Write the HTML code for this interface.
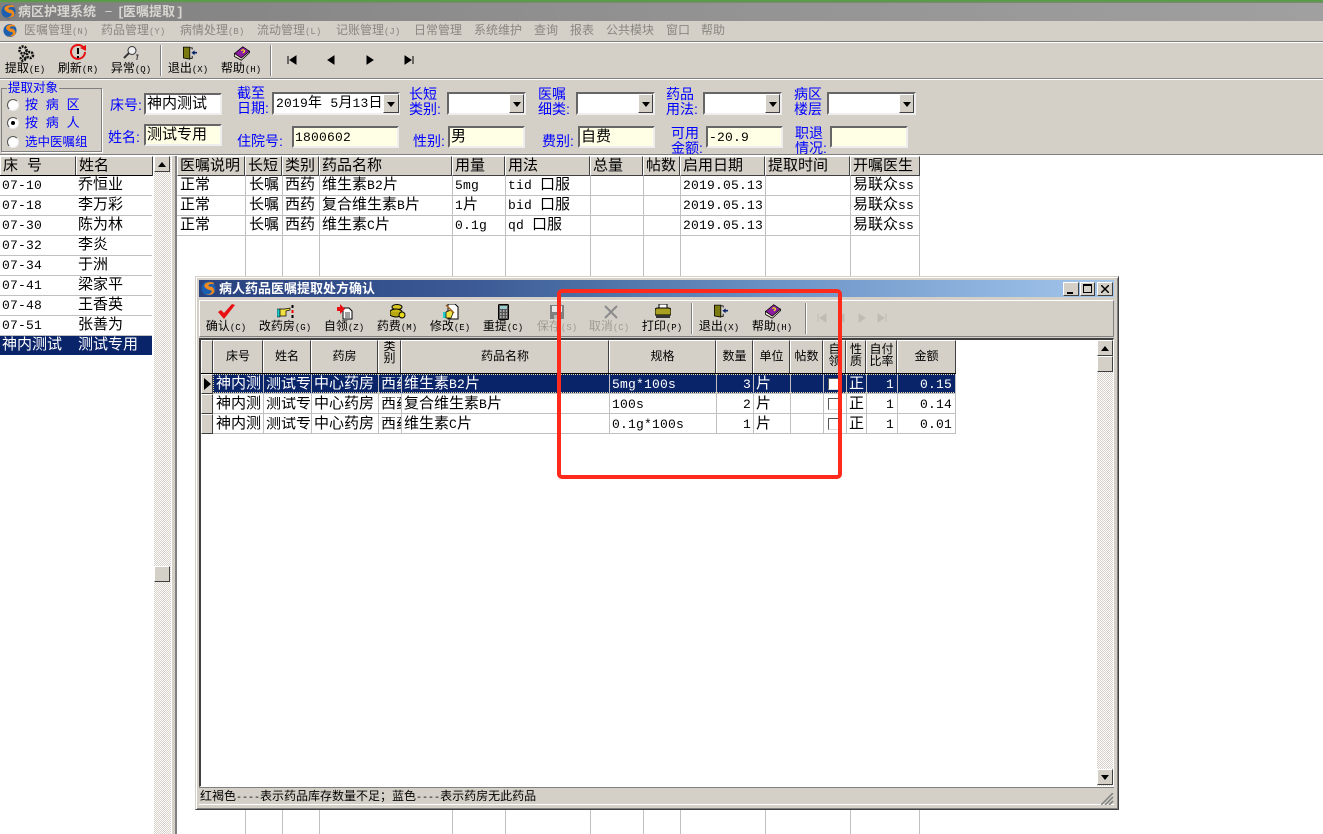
<!DOCTYPE html>
<html><head><meta charset="utf-8"><style>
html,body{margin:0;padding:0;width:1323px;height:834px;overflow:hidden;background:#fff}
body{position:relative;font-family:"Liberation Mono","WenQuanYi Zen Hei","Noto Sans CJK SC",monospace;font-size:15px;color:#000}
div,svg.i{position:absolute}
.b{box-sizing:border-box}
i{font-style:normal;font-size:13px;letter-spacing:.2px}
small{font-size:9px}
.t{position:absolute;white-space:nowrap;line-height:16px}
.m{font-size:12px;color:#8a8680;top:23px}
.l{font-size:12px;text-align:center;width:70px;top:61px}
.dl{font-size:12px;text-align:center;width:70px;top:319px}
.g{color:#a09c94}
.lb{color:#0000ff;font-family:"Liberation Sans","WenQuanYi Zen Hei","Noto Sans CJK SC",sans-serif;font-size:14px;line-height:15px}
.in{box-sizing:border-box;border:2px solid;border-color:#666 #eee #eee #666;background:#fff;padding-left:1px;line-height:20px;font-size:15px;white-space:nowrap;overflow:hidden}
.y{background:#ffffe6}
.ar{box-sizing:border-box;background:#d4d0c8;border:1px solid;border-color:#fff #404040 #404040 #fff}
.ar:after{content:"";position:absolute;left:50%;top:50%;margin:-2px 0 0 -4px;border:4px solid transparent;border-top:5px solid #000;border-bottom:0}
.up:after{border-bottom:5px solid #000;border-top:0}
.nb:after{display:none}
.hd{box-sizing:border-box;background:#d4d0c8;border:1px solid;border-color:#fff #404040 #404040 #fff;text-align:center;white-space:nowrap;overflow:hidden}
.h1{top:156px;height:20px;line-height:19px;text-align:left;padding-left:2px}
.d1{top:340px;height:34px;font-size:12px;line-height:33px}
.d2{top:340px;height:34px;font-size:12px;line-height:12px;padding-top:3px}
.dit{background:repeating-conic-gradient(#d4d0c8 0 25%,#fff 0 50%) 0 0/2px 2px}
.vl{width:1px;background:#c0c0c0}
.hl{height:1px;background:#c0c0c0}
.rd{width:12px;height:12px;border-radius:50%;box-sizing:border-box;background:#fff;border:1px solid;border-color:#555 #eee #eee #555}
.sep{width:2px;background:linear-gradient(to right,#808080 50%,#fff 50%)}
</style></head><body>
<svg width="0" height="0" style="position:absolute"><defs>
<symbol id="logo" viewBox="0 0 16 16"><circle cx="8" cy="8" r="7.5" fill="#1c5fb0"/><path d="M13 1.500C6 0 1 4 5 7.500s8 1.500 6 4.500-5 2.500-8 1.500C9 16.500 16 14 14 9S8 7 8 5s3-2 6-1.500z" fill="#f08a1c"/></symbol>
<symbol id="exit" viewBox="0 0 20 18"><path d="M3 1h8v15l-8-1.500z" fill="#7a7a10" stroke="#000"/><path d="M11 2h3v2M14 12v3h-3" fill="none" stroke="#000"/><path d="M13 8l4-3v2h3v2h-3v2z" fill="#0a246a"/></symbol>
<symbol id="help" viewBox="0 0 24 20"><path d="M2 10L13 1l9 6-11 10z" fill="#8a1ca0" stroke="#000"/><path d="M2 10v4l9 5 11-10V7L11 16z" fill="#f0e8d0" stroke="#000"/><path d="M11 6q3-2 4 0t-2 3" fill="none" stroke="#ff0" stroke-width="1.500"/></symbol>
<symbol id="nf" viewBox="0 0 10 10"><path d="M1 1v8M9 1v8L3 5z" stroke="currentColor" fill="currentColor"/></symbol>
<symbol id="np" viewBox="0 0 10 10"><path d="M8 1v8L2 5z" fill="currentColor" stroke="currentColor"/></symbol>
<symbol id="nn" viewBox="0 0 10 10"><path d="M2 1v8l6-4z" fill="currentColor" stroke="currentColor"/></symbol>
<symbol id="nl" viewBox="0 0 10 10"><path d="M9 1v8M1 1v8l6-4z" stroke="currentColor" fill="currentColor"/></symbol>
</defs></svg>

<!-- title -->
<div style="left:0;top:0;width:1323px;height:2px;background:#5c9a4c"></div>
<div style="left:0;top:2px;width:1323px;height:1px;background:#7a8a70"></div>
<div style="left:0;top:3px;width:1323px;height:18px;background:linear-gradient(to right,#7f7f7f 0,#858585 190px,#8d8d8d 450px,#939393 720px,#a0a0a0 1323px)"></div>
<svg class="i" style="left:1px;top:4px" width="15" height="15"><use href="#logo"/></svg>
<span class="t" style="left:18px;top:4px;color:#d8d6d0;font-size:13px;font-weight:bold;line-height:18px">病区护理系统</span>
<span class="t" style="left:104px;top:4px;color:#d8d6d0;font-size:9px;font-weight:bold;line-height:18px">－</span>
<span class="t" style="left:117px;top:4px;color:#d8d6d0;font-size:13px;font-weight:bold;line-height:18px">[</span>
<span class="t" style="left:123px;top:4px;color:#d8d6d0;font-size:13px;font-weight:bold;line-height:18px">医嘱提取</span>
<span class="t" style="left:176px;top:4px;color:#d8d6d0;font-size:13px;font-weight:bold;line-height:18px">]</span>
<!-- menu -->
<div style="left:0;top:21px;width:1323px;height:20px;background:#d4d0c8"></div>
<svg class="i" style="left:3px;top:23px" width="14" height="15"><use href="#logo"/></svg>
<span class="t m" style="left:24px">医嘱管理<small>(N)</small></span><span class="t m" style="left:101px">药品管理<small>(Y)</small></span><span class="t m" style="left:180px">病情处理<small>(B)</small></span><span class="t m" style="left:257px">流动管理<small>(L)</small></span><span class="t m" style="left:336px">记账管理<small>(J)</small></span><span class="t m" style="left:414px">日常管理</span><span class="t m" style="left:474px">系统维护</span><span class="t m" style="left:534px">查询</span><span class="t m" style="left:570px">报表</span><span class="t m" style="left:606px">公共模块</span><span class="t m" style="left:666px">窗口</span><span class="t m" style="left:701px">帮助</span>
<div style="left:0;top:41px;width:1323px;height:1px;background:#808080"></div>
<div style="left:0;top:42px;width:1323px;height:1px;background:#fff"></div>
<!-- toolbar -->
<div style="left:0;top:43px;width:1323px;height:111px;background:#d4d0c8"></div>
<div style="left:0;top:78px;width:1323px;height:1px;background:#808080"></div>
<div style="left:0;top:79px;width:1323px;height:1px;background:#fff"></div>
<svg class="i" style="left:17px;top:45px" width="18" height="17" viewBox="0 0 18 17"><g fill="none" stroke="#111" stroke-width="2.600" stroke-dasharray="2 1"><circle cx="6" cy="5" r="3.500"/><circle cx="13" cy="10" r="3"/><circle cx="6" cy="13.500" r="2.200"/></g></svg>
<svg class="i" style="left:70px;top:44px" width="17" height="17" viewBox="0 0 17 17"><path d="M13 3a7 7 0 1 0 2 5" fill="none" stroke="#e81010" stroke-width="2"/><path d="M10 4l6-3v6z" fill="#e81010"/><path d="M8 4v6M8 12v2" stroke="#000" stroke-width="2"/></svg>
<svg class="i" style="left:123px;top:45px" width="16" height="16" viewBox="0 0 16 16"><circle cx="9" cy="5.500" r="4" fill="#eee" stroke="#333"/><path d="M6 8L1 13" stroke="#333" stroke-width="2"/><path d="M13 10h2l-1 3v2" fill="none" stroke="#333"/></svg>
<div class="sep" style="left:160px;top:45px;height:31px"></div>
<svg class="i" style="left:181px;top:46px" width="16" height="15"><use href="#exit"/></svg>
<svg class="i" style="left:233px;top:45px" width="18" height="17"><use href="#help"/></svg>
<div class="sep" style="left:270px;top:45px;height:31px"></div>
<svg class="i" style="left:287px;top:55px;color:#000" width="10" height="10"><use href="#nf"/></svg>
<svg class="i" style="left:326px;top:55px;color:#000" width="10" height="10"><use href="#np"/></svg>
<svg class="i" style="left:365px;top:55px;color:#000" width="10" height="10"><use href="#nn"/></svg>
<svg class="i" style="left:404px;top:55px;color:#000" width="10" height="10"><use href="#nl"/></svg>
<span class="t l" style="left:-10px">提取<small>(E)</small></span><span class="t l" style="left:43px">刷新<small>(R)</small></span><span class="t l" style="left:96px">异常<small>(Q)</small></span><span class="t l" style="left:153px">退出<small>(X)</small></span><span class="t l" style="left:206px">帮助<small>(H)</small></span>

<!-- group -->
<div class="b" style="left:1px;top:88px;width:101px;height:64px;border:1px solid #808080;box-shadow:1px 1px 0 #fff"></div>
<span class="t" style="left:7px;top:81px;font-size:12.5px;color:#00f;background:#d4d0c8;padding:0 1px">提取对象</span>
<div class="rd" style="left:7px;top:99px"></div><div class="rd" style="left:7px;top:117px"></div><div class="rd" style="left:7px;top:136px"></div>
<div style="left:11px;top:121px;width:4px;height:4px;border-radius:50%;background:#000"></div>
<span class="t" style="left:25px;top:98px;font-size:13px;color:#00f">按 病 区</span>
<span class="t" style="left:25px;top:116px;font-size:13px;color:#00f">按 病 人</span>
<span class="t" style="left:25px;top:135px;font-size:12.5px;color:#00f">选中医嘱组</span>

<!-- form -->
<span class="t lb" style="left:110px;top:98px">床号:</span>
<div class="in" style="left:144px;top:93px;width:78px;height:22px">神内测试</div>
<span class="t lb" style="left:108px;top:130px">姓名:</span>
<div class="in y" style="left:144px;top:124px;width:78px;height:22px">测试专用</div>
<span class="t lb" style="left:237px;top:86px">截至<br>日期:</span>
<div class="in" style="left:272px;top:92px;width:128px;height:23px;font-size:14px;padding-left:2px"><i>2019</i>年 <i>5</i>月<i>13</i>日</div><div class="ar" style="left:383px;top:94px;width:16px;height:19px"></div>
<span class="t lb" style="left:409px;top:87px">长短<br>类别:</span>
<div class="in" style="left:447px;top:92px;width:79px;height:23px"></div><div class="ar" style="left:509px;top:94px;width:15px;height:19px"></div>
<span class="t lb" style="left:538px;top:87px">医嘱<br>细类:</span>
<div class="in" style="left:576px;top:92px;width:79px;height:23px"></div><div class="ar" style="left:638px;top:94px;width:15px;height:19px"></div>
<span class="t lb" style="left:666px;top:87px">药品<br>用法:</span>
<div class="in" style="left:703px;top:92px;width:79px;height:23px"></div><div class="ar" style="left:765px;top:94px;width:15px;height:19px"></div>
<span class="t lb" style="left:794px;top:87px">病区<br>楼层</span>
<div class="in" style="left:827px;top:92px;width:89px;height:23px"></div><div class="ar" style="left:899px;top:94px;width:15px;height:19px"></div>

<span class="t lb" style="left:237px;top:134px">住院号:</span>
<div class="in y" style="left:292px;top:126px;width:107px;height:22px"><i>1800602</i></div>
<span class="t lb" style="left:413px;top:134px">性别:</span>
<div class="in y" style="left:448px;top:126px;width:77px;height:22px">男</div>
<span class="t lb" style="left:542px;top:134px">费别:</span>
<div class="in y" style="left:578px;top:126px;width:77px;height:22px">自费</div>
<span class="t lb" style="left:671px;top:126px">可用<br>金额:</span>
<div class="in y" style="left:706px;top:126px;width:77px;height:22px"><i>-20.9</i></div>
<span class="t lb" style="left:795px;top:126px">职退<br>情况:</span>
<div class="in y" style="left:830px;top:126px;width:78px;height:22px"></div>

<div style="left:0;top:154px;width:1323px;height:1px;background:#808080"></div>
<div style="left:0;top:155px;width:1323px;height:1px;background:#fff"></div>

<!-- left grid -->
<div class="hd h1" style="left:0;width:76px">床 号</div>
<div class="hd h1" style="left:76px;width:77px">姓名</div>
<div style="left:0;top:175px;width:152px;height:1px;background:#000"></div>
<div class="hl" style="left:0;top:195px;width:152px"></div><div class="hl" style="left:0;top:215px;width:152px"></div><div class="hl" style="left:0;top:235px;width:152px"></div><div class="hl" style="left:0;top:255px;width:152px"></div><div class="hl" style="left:0;top:275px;width:152px"></div><div class="hl" style="left:0;top:295px;width:152px"></div><div class="hl" style="left:0;top:315px;width:152px"></div><div class="hl" style="left:0;top:335px;width:152px"></div>
<div style="left:0;top:336px;width:152px;height:19px;background:#0a246a"></div>
<span class="t" style="left:2px;top:178px"><i>07-10</i></span><span class="t" style="left:78px;top:178px">乔恒业</span>
<span class="t" style="left:2px;top:198px"><i>07-18</i></span><span class="t" style="left:78px;top:198px">李万彩</span>
<span class="t" style="left:2px;top:218px"><i>07-30</i></span><span class="t" style="left:78px;top:218px">陈为林</span>
<span class="t" style="left:2px;top:238px"><i>07-32</i></span><span class="t" style="left:78px;top:238px">李炎</span>
<span class="t" style="left:2px;top:258px"><i>07-34</i></span><span class="t" style="left:78px;top:258px">于洲</span>
<span class="t" style="left:2px;top:278px"><i>07-41</i></span><span class="t" style="left:78px;top:278px">梁家平</span>
<span class="t" style="left:2px;top:298px"><i>07-48</i></span><span class="t" style="left:78px;top:298px">王香英</span>
<span class="t" style="left:2px;top:318px"><i>07-51</i></span><span class="t" style="left:78px;top:318px">张善为</span>
<span class="t" style="left:2px;top:338px;color:#fff">神内测试</span><span class="t" style="left:78px;top:338px;color:#fff">测试专用</span>

<!-- left scrollbar + splitter -->
<div class="dit" style="left:154px;top:156px;width:17px;height:678px"></div>
<div class="ar up" style="left:154px;top:156px;width:16px;height:16px"></div>
<div class="ar nb" style="left:154px;top:566px;width:16px;height:16px"></div>
<div style="left:171px;top:156px;width:1px;height:678px;background:#fff"></div>
<div style="left:172px;top:156px;width:3px;height:678px;background:#d4d0c8"></div>
<div style="left:175px;top:156px;width:2px;height:678px;background:#808080"></div>

<!-- main grid -->
<div class="vl" style="left:245px;top:175px;height:659px"></div><div class="vl" style="left:282px;top:175px;height:659px"></div><div class="vl" style="left:319px;top:175px;height:659px"></div><div class="vl" style="left:452px;top:175px;height:659px"></div><div class="vl" style="left:505px;top:175px;height:659px"></div><div class="vl" style="left:590px;top:175px;height:659px"></div><div class="vl" style="left:643px;top:175px;height:659px"></div><div class="vl" style="left:680px;top:175px;height:659px"></div><div class="vl" style="left:765px;top:175px;height:659px"></div><div class="vl" style="left:850px;top:175px;height:659px"></div><div class="vl" style="left:919px;top:175px;height:659px"></div>
<div class="hl" style="left:177px;top:195px;width:743px"></div><div class="hl" style="left:177px;top:215px;width:743px"></div><div class="hl" style="left:177px;top:235px;width:743px"></div>
<div class="hd h1" style="left:177px;width:68px">医嘱说明</div>
<div class="hd h1" style="left:245px;width:37px">长短</div>
<div class="hd h1" style="left:282px;width:37px">类别</div>
<div class="hd h1" style="left:319px;width:133px">药品名称</div>
<div class="hd h1" style="left:452px;width:53px">用量</div>
<div class="hd h1" style="left:505px;width:85px">用法</div>
<div class="hd h1" style="left:590px;width:53px">总量</div>
<div class="hd h1" style="left:643px;width:37px">帖数</div>
<div class="hd h1" style="left:680px;width:85px">启用日期</div>
<div class="hd h1" style="left:765px;width:85px">提取时间</div>
<div class="hd h1" style="left:850px;width:70px">开嘱医生</div>

<span class="t" style="left:180px;top:178px">正常</span><span class="t" style="left:249px;top:178px">长嘱</span><span class="t" style="left:285px;top:178px">西药</span><span class="t" style="left:322px;top:178px">维生素<i>B2</i>片</span><span class="t" style="left:455px;top:178px"><i>5mg</i></span><span class="t" style="left:508px;top:178px"><i>tid </i>口服</span><span class="t" style="left:683px;top:178px"><i>2019.05.13</i></span><span class="t" style="left:853px;top:178px">易联众<i>ss</i></span>
<span class="t" style="left:180px;top:198px">正常</span><span class="t" style="left:249px;top:198px">长嘱</span><span class="t" style="left:285px;top:198px">西药</span><span class="t" style="left:322px;top:198px">复合维生素<i>B</i>片</span><span class="t" style="left:455px;top:198px"><i>1</i>片</span><span class="t" style="left:508px;top:198px"><i>bid </i>口服</span><span class="t" style="left:683px;top:198px"><i>2019.05.13</i></span><span class="t" style="left:853px;top:198px">易联众<i>ss</i></span>
<span class="t" style="left:180px;top:218px">正常</span><span class="t" style="left:249px;top:218px">长嘱</span><span class="t" style="left:285px;top:218px">西药</span><span class="t" style="left:322px;top:218px">维生素<i>C</i>片</span><span class="t" style="left:455px;top:218px"><i>0.1g</i></span><span class="t" style="left:508px;top:218px"><i>qd </i>口服</span><span class="t" style="left:683px;top:218px"><i>2019.05.13</i></span><span class="t" style="left:853px;top:218px">易联众<i>ss</i></span>

<!-- dialog -->
<div class="b" style="left:195px;top:276px;width:924px;height:534px;background:#d4d0c8;border:1px solid;border-color:#d4d0c8 #404040 #404040 #d4d0c8;box-shadow:inset 1px 1px 0 #fff,inset -1px -1px 0 #808080"></div>
<div style="left:199px;top:280px;width:915px;height:17px;background:linear-gradient(to right,#28417f 0,#3c5a95 30%,#4f74a9 45%,#6e96c8 65%,#a3c6ec 100%)"></div>
<svg class="i" style="left:201px;top:281px" width="15" height="15"><use href="#logo"/></svg>
<span class="t" style="left:219px;top:281px;color:#fff;font-size:13px;font-weight:bold;line-height:17px">病人药品医嘱提取处方确认</span>
<div class="b" style="left:1063px;top:282px;width:16px;height:14px;background:#d4d0c8;border:1px solid;border-color:#fff #404040 #404040 #fff"><div style="left:3px;top:9px;width:6px;height:2px;background:#000"></div></div>
<div class="b" style="left:1080px;top:282px;width:15px;height:14px;background:#d4d0c8;border:1px solid;border-color:#fff #404040 #404040 #fff"><div class="b" style="left:2px;top:1px;width:9px;height:9px;border:1px solid #000;border-top-width:2px"></div></div>
<div class="b" style="left:1097px;top:282px;width:16px;height:14px;background:#d4d0c8;border:1px solid;border-color:#fff #404040 #404040 #fff"><svg class="i" style="left:3px;top:2px" width="8" height="8"><path d="M0 0l8 8M8 0L0 8" stroke="#000" stroke-width="1.500"/></svg></div>

<div class="b" style="left:199px;top:300px;width:915px;height:37px;border:1px solid;border-color:#fff #808080 #808080 #fff"></div>
<svg class="i" style="left:218px;top:304px" width="17" height="15" viewBox="0 0 17 15"><path d="M0 8l3-2 3 3 8-9 3 1-11 14z" fill="#e81010"/></svg>
<svg class="i" style="left:277px;top:305px" width="17" height="14" viewBox="0 0 17 14"><path d="M0 4h3v8H0z" fill="#2cc" stroke="#000" stroke-width=".5"/><path d="M3 4h5l5-1v2l-4 1v5H3z" fill="#f0e040" stroke="#000" stroke-width=".7"/><path d="M15.500 0v3" stroke="#000" stroke-width="2"/><path d="M15.500 5v3" stroke="#e00" stroke-width="2"/><path d="M15.500 10v3" stroke="#000" stroke-width="2"/></svg>
<svg class="i" style="left:337px;top:304px" width="16" height="16" viewBox="0 0 16 16"><path d="M6 4h6l3 3v8H6z" fill="#fff" stroke="#000"/><path d="M8 9h5M8 11h5M8 13h5" stroke="#000" stroke-width=".8"/><path d="M0 3h3V0l5 5-5 5V7H0z" fill="#e81010"/></svg>
<svg class="i" style="left:390px;top:304px" width="16" height="16" viewBox="0 0 16 16"><ellipse cx="7" cy="3" rx="5" ry="2.500" fill="#d8c820" stroke="#000"/><ellipse cx="6" cy="8" rx="6" ry="3" fill="#c8b818" stroke="#000"/><path d="M0 8v3q6 4 12 0V8" fill="#b8a810" stroke="#000"/><circle cx="12" cy="11" r="3" fill="#e8d820" stroke="#000"/></svg>
<svg class="i" style="left:443px;top:304px" width="16" height="16" viewBox="0 0 16 16"><path d="M5 0h7l3 3v12H5z" fill="#fff" stroke="#000"/><path d="M0 8h3v6H0z" fill="#2cc"/><path d="M3 8l5-2 2 3-2 5H3z" fill="#f0e040" stroke="#000" stroke-width=".7"/><path d="M3 1l8 8" stroke="#a06020" stroke-width="1.500"/></svg>
<svg class="i" style="left:498px;top:304px" width="11" height="16" viewBox="0 0 11 16"><rect x=".5" y=".5" width="10" height="15" rx="1" fill="#555" stroke="#000"/><rect x="2" y="2" width="7" height="3" fill="#9cc"/><path d="M2 7h1.500M5 7h1.500M8 7h1M2 10h1.500M5 10h1.500M8 10h1M2 13h1.500M5 13h1.500M8 13h1" stroke="#fff"/></svg>
<svg class="i" style="left:550px;top:305px" width="14" height="14" viewBox="0 0 14 14"><rect width="14" height="14" fill="#808080"/><rect x="2" y="1" width="10" height="6" fill="#e8e8e8"/><rect x="4" y="10" width="6" height="4" fill="#b8b8b8"/></svg>
<svg class="i" style="left:604px;top:305px" width="14" height="14" viewBox="0 0 14 14"><path d="M1 1l12 12M13 1L1 13" stroke="#8a8a8a" stroke-width="2"/></svg>
<svg class="i" style="left:655px;top:304px" width="16" height="15" viewBox="0 0 16 15"><path d="M4 0h8v5H4z" fill="#fff" stroke="#000"/><path d="M0 6q0-2 3-2h10q3 0 3 2v5H0z" fill="#a8a020" stroke="#000"/><path d="M1 11h14v3H1z" fill="#333"/></svg>
<div class="sep" style="left:691px;top:303px;height:31px"></div>
<svg class="i" style="left:712px;top:304px" width="16" height="15"><use href="#exit"/></svg>
<svg class="i" style="left:764px;top:303px" width="18" height="17"><use href="#help"/></svg>
<div class="sep" style="left:805px;top:303px;height:31px"></div>
<svg class="i" style="left:816px;top:313px;color:#c0bcb4" width="12" height="10"><use href="#nf"/></svg>
<svg class="i" style="left:836px;top:313px;color:#c0bcb4" width="10" height="10"><use href="#np"/></svg>
<svg class="i" style="left:857px;top:313px;color:#c0bcb4" width="10" height="10"><use href="#nn"/></svg>
<svg class="i" style="left:876px;top:313px;color:#c0bcb4" width="12" height="10"><use href="#nl"/></svg>
<span class="t dl" style="left:191px">确认<small>(C)</small></span><span class="t dl" style="left:250px">改药房<small>(G)</small></span><span class="t dl" style="left:309px">自领<small>(Z)</small></span><span class="t dl" style="left:362px">药费<small>(M)</small></span><span class="t dl" style="left:415px">修改<small>(E)</small></span><span class="t dl" style="left:468px">重提<small>(C)</small></span><span class="t dl g" style="left:522px">保存<small>(S)</small></span><span class="t dl g" style="left:574px">取消<small>(C)</small></span><span class="t dl" style="left:627px">打印<small>(P)</small></span><span class="t dl" style="left:684px">退出<small>(X)</small></span><span class="t dl" style="left:737px">帮助<small>(H)</small></span>

<div class="b" style="left:199px;top:338px;width:915px;height:449px;background:#fff;border:1px solid;border-color:#404040 #fff #fff #404040;border-left-width:2px;border-top-width:2px"></div>
<div class="hd" style="left:201px;top:340px;width:12px;height:34px"></div>
<div class="hd d1" style="left:213px;width:50px">床号</div>
<div class="hd d1" style="left:263px;width:48px">姓名</div>
<div class="hd d1" style="left:311px;width:67px">药房</div>
<div class="hd d2" style="left:378px;width:23px;padding-top:0">类<br>别</div>
<div class="hd d1" style="left:401px;width:208px">药品名称</div>
<div class="hd d1" style="left:609px;width:107px">规格</div>
<div class="hd d1" style="left:716px;width:37px">数量</div>
<div class="hd d1" style="left:753px;width:37px">单位</div>
<div class="hd d1" style="left:790px;width:33px">帖数</div>
<div class="hd d2" style="left:823px;width:23px">自<br>领</div>
<div class="hd d2" style="left:846px;width:20px">性<br>质</div>
<div class="hd d2" style="left:866px;width:31px">自付<br>比率</div>
<div class="hd d1" style="left:897px;width:59px">金额</div>
<div style="left:201px;top:373px;width:755px;height:1px;background:#000"></div>

<div class="hd" style="left:201px;top:374px;width:12px;height:20px"></div><div class="hd" style="left:201px;top:394px;width:12px;height:20px"></div><div class="hd" style="left:201px;top:414px;width:12px;height:20px"></div>
<svg class="i" style="left:204px;top:378px" width="7" height="12"><path d="M0 0l7 6-7 6z" fill="#000"/></svg>
<div style="left:213px;top:374px;width:743px;height:19px;background:#0a246a"></div>
<div class="b" style="left:213px;top:374px;width:743px;height:19px;border:1px dotted #e8d8a0"></div>
<div class="hl" style="left:213px;top:393px;width:743px"></div><div class="hl" style="left:213px;top:413px;width:743px"></div><div class="hl" style="left:213px;top:433px;width:743px"></div>
<div class="vl" style="left:263px;top:374px;height:60px"></div><div class="vl" style="left:311px;top:374px;height:60px"></div><div class="vl" style="left:378px;top:374px;height:60px"></div><div class="vl" style="left:401px;top:374px;height:60px"></div><div class="vl" style="left:609px;top:374px;height:60px"></div><div class="vl" style="left:716px;top:374px;height:60px"></div><div class="vl" style="left:753px;top:374px;height:60px"></div><div class="vl" style="left:790px;top:374px;height:60px"></div><div class="vl" style="left:823px;top:374px;height:60px"></div><div class="vl" style="left:846px;top:374px;height:60px"></div><div class="vl" style="left:866px;top:374px;height:60px"></div><div class="vl" style="left:897px;top:374px;height:60px"></div><div class="vl" style="left:955px;top:374px;height:60px"></div>

<span class="t" style="left:216px;top:377px;color:#fff">神内测</span><span class="t" style="left:266px;top:377px;color:#fff;width:45px;overflow:hidden">测试专</span><span class="t" style="left:314px;top:377px;color:#fff">中心药房</span><span class="t" style="left:381px;top:377px;color:#fff;width:20px;overflow:hidden">西药</span><span class="t" style="left:404px;top:377px;color:#fff">维生素<i>B2</i>片</span><span class="t" style="left:612px;top:377px;color:#fff"><i>5mg*100s</i></span><span class="t" style="left:743px;top:377px;color:#fff"><i>3</i></span><span class="t" style="left:756px;top:377px;color:#fff">片</span><span class="t" style="left:849px;top:377px;color:#fff">正</span><span class="t" style="left:886px;top:377px;color:#fff"><i>1</i></span><span class="t" style="left:920px;top:377px;color:#fff"><i>0.15</i></span>
<span class="t" style="left:216px;top:397px">神内测</span><span class="t" style="left:266px;top:397px;width:45px;overflow:hidden">测试专</span><span class="t" style="left:314px;top:397px">中心药房</span><span class="t" style="left:381px;top:397px;width:20px;overflow:hidden">西药</span><span class="t" style="left:404px;top:397px">复合维生素<i>B</i>片</span><span class="t" style="left:612px;top:397px"><i>100s</i></span><span class="t" style="left:743px;top:397px"><i>2</i></span><span class="t" style="left:756px;top:397px">片</span><span class="t" style="left:849px;top:397px">正</span><span class="t" style="left:886px;top:397px"><i>1</i></span><span class="t" style="left:920px;top:397px"><i>0.14</i></span>
<span class="t" style="left:216px;top:417px">神内测</span><span class="t" style="left:266px;top:417px;width:45px;overflow:hidden">测试专</span><span class="t" style="left:314px;top:417px">中心药房</span><span class="t" style="left:381px;top:417px;width:20px;overflow:hidden">西药</span><span class="t" style="left:404px;top:417px">维生素<i>C</i>片</span><span class="t" style="left:612px;top:417px"><i>0.1g*100s</i></span><span class="t" style="left:743px;top:417px"><i>1</i></span><span class="t" style="left:756px;top:417px">片</span><span class="t" style="left:849px;top:417px">正</span><span class="t" style="left:886px;top:417px"><i>1</i></span><span class="t" style="left:920px;top:417px"><i>0.01</i></span>
<div class="b" style="left:828px;top:378px;width:12px;height:12px;background:#fff;border:1px solid;border-color:#555 #ddd #ddd #555"></div>
<div class="b" style="left:828px;top:398px;width:12px;height:12px;background:#fff;border:1px solid;border-color:#555 #ddd #ddd #555"></div>
<div class="b" style="left:828px;top:418px;width:12px;height:12px;background:#fff;border:1px solid;border-color:#555 #ddd #ddd #555"></div>

<!-- dialog scrollbar -->
<div class="dit" style="left:1097px;top:340px;width:16px;height:446px"></div>
<div class="ar up" style="left:1097px;top:340px;width:16px;height:16px"></div>
<div class="b" style="left:1097px;top:356px;width:16px;height:16px;background:#d4d0c8;border:1px solid;border-color:#fff #404040 #404040 #fff"></div>
<div class="ar" style="left:1097px;top:769px;width:16px;height:16px"></div>

<!-- status -->
<div style="left:199px;top:787px;width:915px;height:1px;background:#808080"></div>
<span class="t" style="left:200px;top:789px;font-size:12px">红褐色<span style="font-size:10px">----</span>表示药品库存数量不足；蓝色<span style="font-size:10px">----</span>表示药房无此药品</span>
<div style="left:199px;top:804px;width:915px;height:1px;background:#fff"></div>
<svg class="i" style="left:1101px;top:793px" width="13" height="12"><path d="M0 12L12 0M4 12L12 4M8 12l4-4" stroke="#808080" stroke-width="1.500"/></svg>

<!-- red annotation -->
<div class="b" style="left:557px;top:289px;width:285px;height:190px;border:4px solid #ff2a1c;border-radius:5px"></div>
</body></html>
